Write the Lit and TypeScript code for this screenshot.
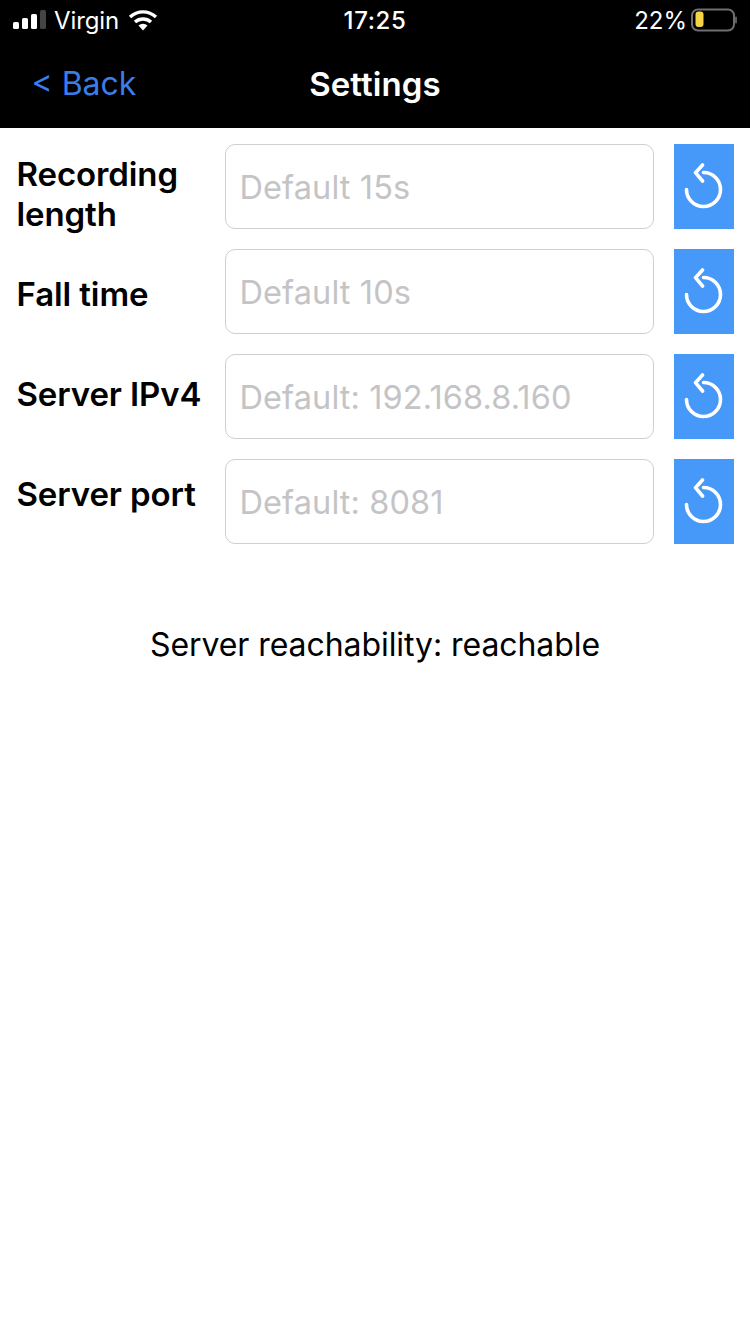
import { LitElement, html, css, svg } from "lit";
import { customElement } from "lit/decorators.js";

const rows = [
  { label: "Recording length", ph: "Default 15s", cls: "a" },
  { label: "Fall time", ph: "Default 10s", cls: "b" },
  { label: "Server IPv4", ph: "Default: 192.168.8.160", cls: "c" },
  { label: "Server port", ph: "Default: 8081", cls: "d" },
];

@customElement("app-root")
export class AppRoot extends LitElement {
  static styles = css`
    :host { display: block; width: 750px; height: 1334px; background: #fff; overflow: hidden;
      font-family: Inter, "Liberation Sans", sans-serif; color: #000; }
    .top { background: #000; height: 128px; color: #fff; display: flex; flex-direction: column; }
    .status { height: 40px; display: grid; grid-template-columns: 1fr auto 1fr; align-items: center; padding: 0 13px; font-size: 24px; }
    .left, .right { display: flex; align-items: center; }
    .carrier { margin-left: 8px; font-size: 24px; letter-spacing: -0.1px; }
    .wifi { margin-left: 9px; }
    .time { font-weight: 500; font-size: 24px; letter-spacing: 0.6px; }
    .right { justify-content: flex-end; }
    .pct { font-size: 24px; margin-right: 4px; letter-spacing: 0; }
    .nav { flex: 1; position: relative; display: flex; align-items: center; justify-content: center; }
    .back { position: absolute; left: 31.5px; top: 24px; color: #3b7de8; font-size: 32px; line-height: 40px; letter-spacing: 0; }
    .title { font-size: 33px; font-weight: 600; line-height: 40px; letter-spacing: 0.1px; }
    .form { padding: 16px 16px 0 16.5px; display: flex; flex-direction: column; gap: 20px; }
    .row { display: flex; height: 85px; }
    .label { width: 208.5px; flex: none; font-size: 33px; font-weight: 600; line-height: 40px; letter-spacing: -0.1px; }
    .a { padding-top: 10px; }
    .b { padding-top: 25px; }
    .c { padding-top: 20px; }
    .d { padding-top: 15px; }
    .a, .b, .c, .d { box-sizing: border-box; height: 85px; }
    input { flex: 1; min-width: 0; box-sizing: border-box; height: 85px; border: 1px solid #cfcfcf; border-radius: 10px; padding: 1px 14px 0 13.5px;
      font: 400 32.5px Inter, "Liberation Sans", sans-serif; letter-spacing: 0.1px; background: #fff; outline: none; }
    input::placeholder { color: #c4c4c6; opacity: 1; }
    .btn { width: 60px; flex: none; margin-left: 20px; background: #4699f9; border: 0; padding: 0; display: flex; align-items: center; justify-content: center; }
    .reach { margin-top: 80px; text-align: center; font-size: 32px; line-height: 42px; letter-spacing: -0.07px; }
  `;

  private icon() {
    return svg`<svg width="40" height="48" viewBox="0 0 40 48" fill="none" stroke="#fff" stroke-width="3.6" stroke-linecap="round" stroke-linejoin="round">
      <path d="M19.5 9.5 A 17 17 0 1 1 2.5 26.5"/>
      <path d="M18.5 2 L11.5 9.7 L18.5 18"/>
    </svg>`;
  }

  render() {
    return html`
      <div class="top">
        <div class="status">
          <div class="left">
            <svg width="33" height="20" viewBox="0 0 33 20">
              <rect x="0" y="12" width="6" height="7" rx="1.5" fill="#fff"/>
              <rect x="9" y="8" width="6" height="11" rx="1.5" fill="#fff"/>
              <rect x="18" y="4" width="6" height="15" rx="1.5" fill="#fff"/>
              <rect x="27" y="0" width="6" height="19" rx="1.5" fill="#444"/>
            </svg>
            <span class="carrier">Virgin</span>
            <svg class="wifi" width="30" height="22" viewBox="0 0 30 22" fill="none" stroke="#fff" stroke-width="3.4">
              <path d="M2 8 A 19 19 0 0 1 28 8"/>
              <path d="M7 13 A 12 12 0 0 1 23 13"/>
              <path d="M15 21.5 L10.5 16.6 A 6.5 6.5 0 0 1 19.5 16.6 Z" fill="#fff" stroke="none"/>
            </svg>
          </div>
          <div class="time">17:25</div>
          <div class="right">
            <span class="pct">22%</span>
            <svg width="46" height="24" viewBox="0 0 46 24">
              <rect x="1" y="1.5" width="42" height="21" rx="6" fill="none" stroke="#6e6e6e" stroke-width="2"/>
              <rect x="4.5" y="3.5" width="8" height="15.5" rx="3" fill="#f7d348"/>
              <rect x="44" y="8.5" width="2" height="7" rx="1" fill="#5a5a5a"/>
            </svg>
          </div>
        </div>
        <div class="nav">
          <span class="back">&lt; Back</span>
          <span class="title">Settings</span>
        </div>
      </div>
      <div class="form">
        ${rows.map(r => html`
          <div class="row">
            <div class="label ${r.cls}">${r.label}</div>
            <input placeholder=${r.ph} />
            <button class="btn">${this.icon()}</button>
          </div>`)}
      </div>
      <div class="reach">Server reachability: reachable</div>
    `;
  }
}
